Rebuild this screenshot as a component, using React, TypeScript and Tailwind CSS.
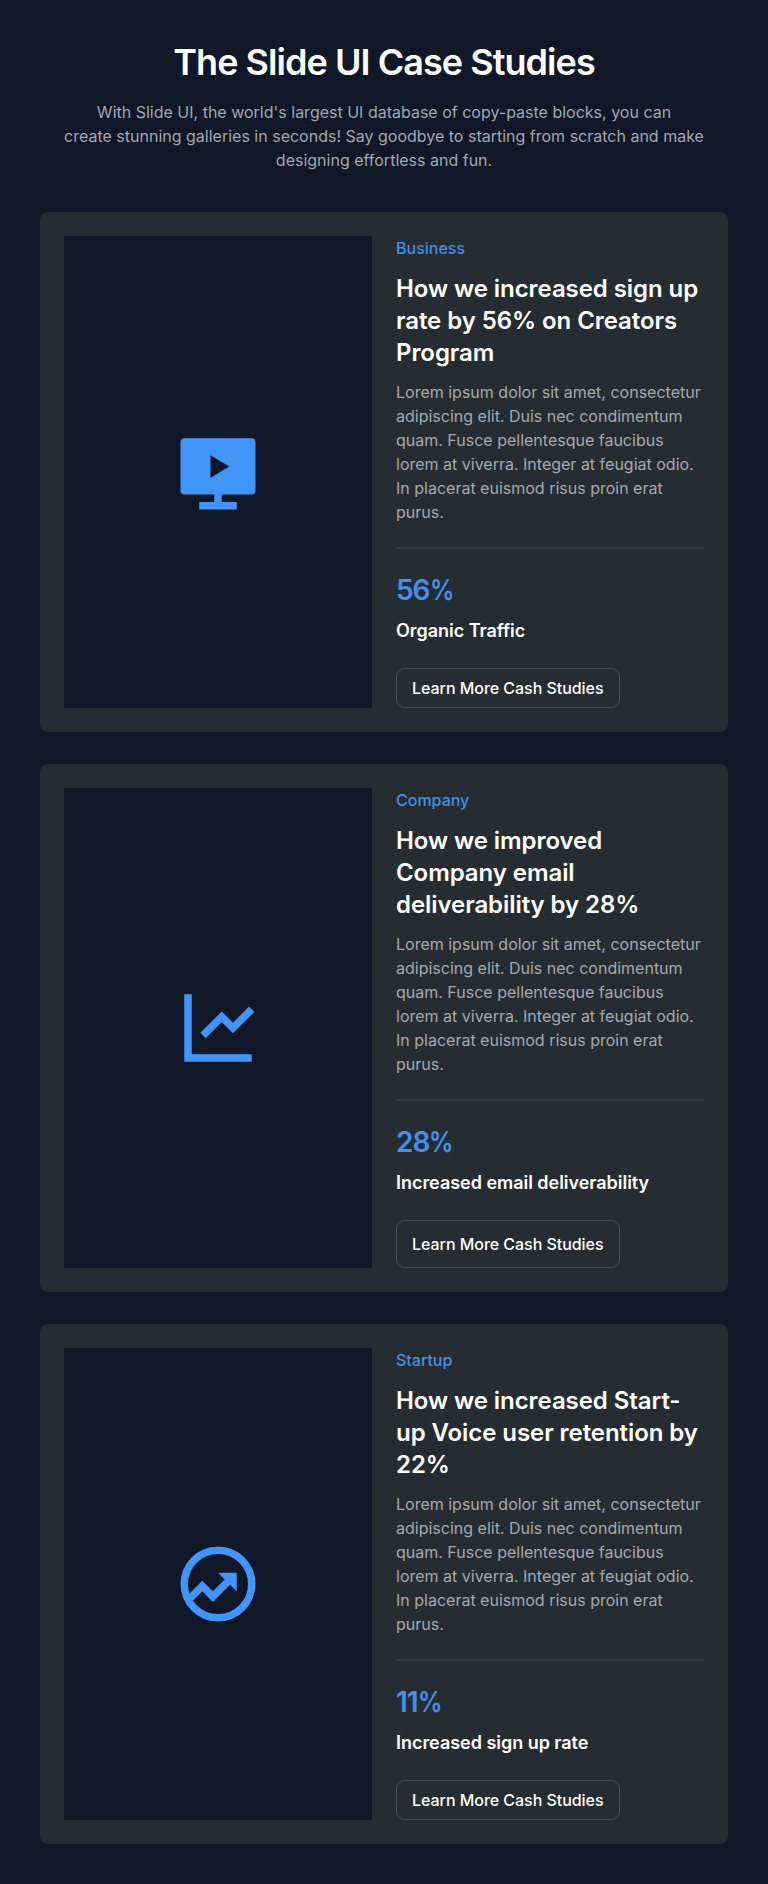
import type { ReactNode } from "react";

type Study = {
  category: string;
  title: string;
  percent: string;
  metric: string;
  buttonClass: string;
  icon: ReactNode;
};

const studies: Study[] = [
  {
    category: "Business",
    title: "How we increased sign up rate by 56% on Creators Program",
    percent: "56",
    metric: "Organic Traffic",
    buttonClass: "h-10",
    icon: (
      <path d="M13 18V20H17V22H7V20H11V18H2.992C2.444 18 2 17.551 2 16.993V4.007C2 3.451 2.455 3 2.992 3H21.008C21.556 3 22 3.449 22 4.007V16.993C22 17.549 21.545 18 21.008 18H13ZM10 7.5V13.5L15 10.5L10 7.5Z" />
    ),
  },
  {
    category: "Company",
    title: "How we improved Company email deliverability by 28%",
    percent: "28",
    metric: "Increased email deliverability",
    buttonClass: "h-12",
    icon: (
      <path d="M5 3V19H21V21H3V3H5ZM20.293 6.293L21.707 7.707L16 13.414L13 10.415L8.707 14.707L7.293 13.293L13 7.586L16 10.585L20.293 6.293Z" />
    ),
  },
  {
    category: "Startup",
    title: "How we increased Start-up Voice user retention by 22%",
    percent: "11",
    metric: "Increased sign up rate",
    buttonClass: "h-10",
    icon: (
      <>
        <circle cx="12" cy="12" r="9" fill="none" stroke="currentColor" strokeWidth="2" />
        <path d="M4.406 14.523L7.808 11.121L10.636 13.95L13.793 10.793L12 9H17V14L15.207 12.207L10.636 16.778L7.808 13.95L5.333 16.424L4 16.5Z" />
      </>
    ),
  },
];

function StudyCard({ study }: { study: Study }) {
  return (
    <article className="grid grid-cols-2 gap-6 rounded-lg bg-[#262d32] p-6">
      <div className="flex items-center justify-center bg-[#101726] text-[#4295f8]">
        <svg className="size-[90px]" viewBox="0 0 24 24" fill="currentColor" aria-hidden="true">
          {study.icon}
        </svg>
      </div>
      <div className="flex flex-col items-start">
        <p className="text-base font-medium text-[#4590e6]">{study.category}</p>
        <h2 className="mt-[13px] text-2xl font-semibold tracking-[-0.07px] text-white">
          {study.title}
        </h2>
        <p className="mt-[11px] text-base text-[#a4a9ae]">
          Lorem ipsum dolor sit amet, consectetur adipiscing elit. Duis nec condimentum quam. Fusce
          pellentesque faucibus lorem at viverra. Integer at feugiat odio. In placerat euismod risus
          proin erat purus.
        </p>
        <div className="mt-[23px] h-0.5 w-full bg-[#343b43]" />
        <p className="mt-[23px] text-[28px] leading-9 font-semibold tracking-[-1px] text-[#4590ec]">
          {study.percent}
          <span className="inline-block origin-left scale-x-[0.87]">%</span>
        </p>
        <p className="mt-[9px] text-lg leading-7 font-semibold tracking-[-0.03px] text-white">
          {study.metric}
        </p>
        <button
          type="button"
          className={`mt-[23px] w-56 rounded-lg border border-[#495059] px-[15px] text-left text-base font-medium tracking-[-0.04px] text-white ${study.buttonClass}`}
        >
          Learn More Cash Studies
        </button>
      </div>
    </article>
  );
}

export default function App() {
  return (
    <main className="min-h-screen bg-[#101726] px-10 py-10 font-['Inter',sans-serif]">
      <header className="mx-auto max-w-[660px] text-center">
        <h1 className="text-4xl leading-[44px] font-semibold tracking-[-0.95px] text-white">
          The Slide UI Case Studies
        </h1>
        <p className="mt-4 text-base text-[#a1a7b0]">
          With Slide UI, the world's largest UI database of copy-paste blocks, you can
          <br />
          create stunning galleries in seconds! Say goodbye to starting from scratch and make
          designing effortless and fun.
        </p>
      </header>
      <section className="mt-10 flex flex-col gap-8">
        {studies.map((study) => (
          <StudyCard key={study.category} study={study} />
        ))}
      </section>
    </main>
  );
}
